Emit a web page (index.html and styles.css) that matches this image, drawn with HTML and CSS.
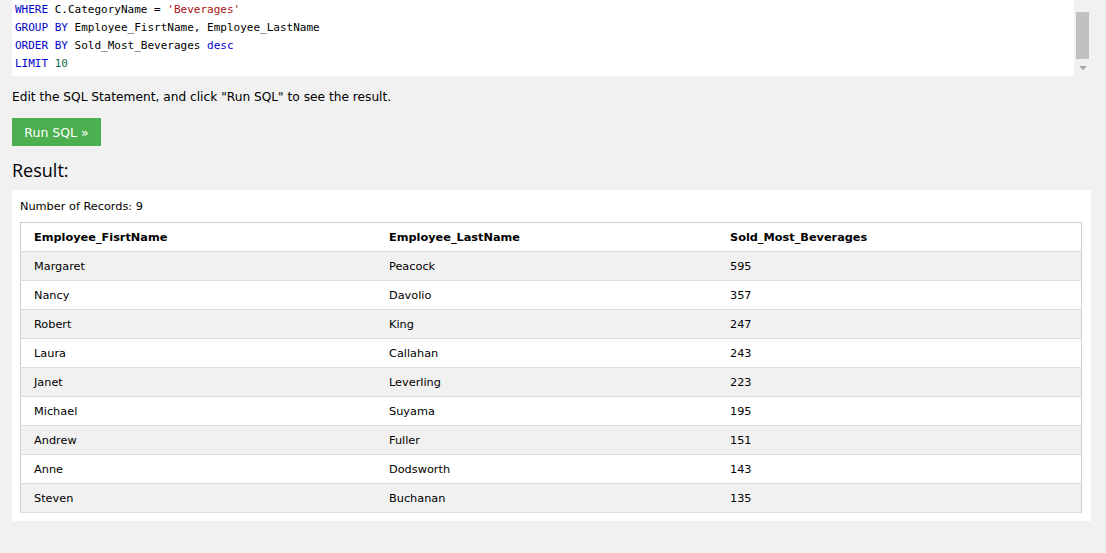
FILE: index.html
```html
<!DOCTYPE html>
<html>
<head>
<meta charset="utf-8">
<link rel="stylesheet" href="styles.css">
</head>
<body>
<div class="editor">
  <pre class="code"><span class="kw">WHERE</span> C.CategoryName = <span class="str">'Beverages'</span>
<span class="kw">GROUP BY</span> Employee_FisrtName, Employee_LastName
<span class="kw">ORDER BY</span> Sold_Most_Beverages <span class="kw">desc</span>
<span class="kw">LIMIT</span> <span class="num">10</span></pre>
  <div class="scrollbar">
    <div class="thumb"></div>
    <div class="arrow"></div>
  </div>
</div>
<p class="hint">Edit the SQL Statement, and click "Run SQL" to see the result.</p>
<button class="run">Run SQL »</button>
<h2 class="result-title">Result:</h2>
<div class="panel">
  <div class="count">Number of Records: 9</div>
  <table class="results">
    <tr><th class="c1">Employee_FisrtName</th><th class="c2">Employee_LastName</th><th class="c3">Sold_Most_Beverages</th></tr>
    <tr><td>Margaret</td><td>Peacock</td><td>595</td></tr>
    <tr><td>Nancy</td><td>Davolio</td><td>357</td></tr>
    <tr><td>Robert</td><td>King</td><td>247</td></tr>
    <tr><td>Laura</td><td>Callahan</td><td>243</td></tr>
    <tr><td>Janet</td><td>Leverling</td><td>223</td></tr>
    <tr><td>Michael</td><td>Suyama</td><td>195</td></tr>
    <tr><td>Andrew</td><td>Fuller</td><td>151</td></tr>
    <tr><td>Anne</td><td>Dodsworth</td><td>143</td></tr>
    <tr><td>Steven</td><td>Buchanan</td><td>135</td></tr>
  </table>
</div>
</body>
</html>
```
FILE: styles.css
```css
html, body {
  margin: 0;
  background: #f1f1f1;
}
body {
  padding: 0 15px 0 12px;
  font-family: "DejaVu Sans", Verdana, sans-serif;
  color: #000;
}
.editor {
  display: flex;
  height: 76px;
  background: #fff;
}
.code {
  flex: 1;
  margin: 0;
  padding: 1px 0 0 3px;
  font-family: "DejaVu Sans Mono", "Liberation Mono", monospace;
  font-size: 11px;
  line-height: 18px;
  color: #000;
  overflow: hidden;
}
.kw { color: #0000cd; }
.str { color: #a11; }
.num { color: #164; }
.scrollbar {
  width: 17px;
  background: #f1f1f1;
  display: flex;
  flex-direction: column;
  align-items: center;
}
.thumb {
  margin-top: 12px;
  width: 13px;
  height: 47px;
  background: #c1c1c1;
}
.arrow {
  margin-top: 7px;
  width: 0;
  height: 0;
  border-left: 4px solid transparent;
  border-right: 4px solid transparent;
  border-top: 4px solid #a3a3a3;
}
.hint {
  margin: 12px 0 0;
  font-size: 12.2px;
  line-height: 18px;
}
.run {
  display: block;
  margin-top: 12px;
  width: 89px;
  height: 28px;
  border: none;
  background: #4caf50;
  color: #fff;
  font-family: "DejaVu Sans", Verdana, sans-serif;
  font-size: 12.5px;
  padding: 0;
}
.result-title {
  margin: 12px 0 0;
  font-family: "Open Sans", "Noto Sans", sans-serif;
  font-weight: normal;
  font-size: 18px;
  line-height: 24px;
}
.panel {
  margin-top: 8px;
  background: #fff;
  padding: 9px 9px 8px 8px;
}
.count {
  font-size: 11.3px;
  line-height: 16px;
  margin-bottom: 7px;
}
.results {
  width: 100%;
  border-collapse: collapse;
  border: 1px solid #ccc;
  font-size: 11.3px;
}
.results th, .results td {
  text-align: left;
  height: 28px;
  padding: 0 0 0 13px;
  border-bottom: 1px solid #ddd;
}
.results tr:nth-child(even) { background: #f1f1f1; }
.results .c1 { width: 342px; }
.results .c2 { width: 328px; }
```
